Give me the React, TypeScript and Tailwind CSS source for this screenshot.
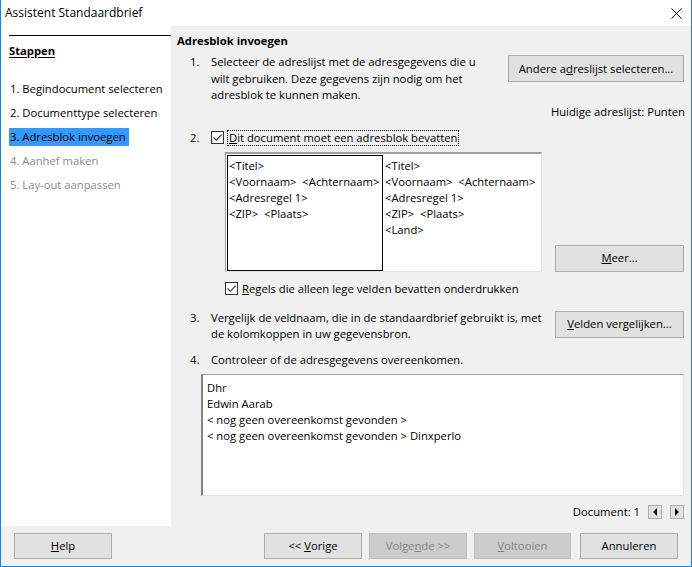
import clsx from "clsx"
import type { ReactNode } from "react"

function Check() {
  return (
    <span className="inline-flex w-[13px] h-[13px] border border-[#333333] bg-white items-center justify-center shrink-0">
      <svg width="11" height="11" viewBox="0 0 11 11">
        <path d="M1.5 5.5 L4.3 8.3 L9.6 2.6" fill="none" stroke="#333333" strokeWidth="1.1" />
      </svg>
    </span>
  )
}

function Btn({ children, className, disabled }: { children: ReactNode; className?: string; disabled?: boolean }) {
  return (
    <div
      className={clsx(
        "flex items-center justify-center border shrink-0",
        disabled ? "bg-[#cccccc] border-[#bfbfbf] text-[#838383]" : "bg-[#e1e1e1] border-[#adadad] text-black",
        className
      )}
    >
      {children}
    </div>
  )
}

function Arrow({ dir }: { dir: "l" | "r" }) {
  return (
    <div className="w-[14px] h-[14px] border border-[#adadad] bg-[#e1e1e1] flex items-center justify-center">
      <svg width="6" height="8" viewBox="0 0 6 8">
        {dir === "l" ? <path d="M5 0 L1 4 L5 8 Z" fill="#000" /> : <path d="M1 0 L5 4 L1 8 Z" fill="#000" />}
      </svg>
    </div>
  )
}

const steps = [
  { label: "1. Begindocument selecteren", state: "done" },
  { label: "2. Documenttype selecteren", state: "done" },
  { label: "3. Adresblok invoegen", state: "active" },
  { label: "4. Aanhef maken", state: "todo" },
  { label: "5. Lay-out aanpassen", state: "todo" },
]

const block = ["<Titel>", "<Voornaam>  <Achternaam>", "<Adresregel 1>", "<ZIP>  <Plaats>"]

export default function App() {
  return (
    <div className="w-[692px] h-[567px] flex flex-col border-l border-r border-b border-[#1883d7] bg-[#f0f0f0] text-[11.25px] text-black font-['Open_Sans',sans-serif] overflow-hidden">
      {/* title bar */}
      <div className="h-[26px] bg-white flex items-center pl-[4px] pr-[9px] shrink-0">
        <span className="text-[12px]">Assistent Standaardbrief</span>
        <svg className="ml-auto" width="11" height="11" viewBox="0 0 11 11">
          <path d="M0.5 0.5 L10.5 10.5 M10.5 0.5 L0.5 10.5" stroke="#000" strokeWidth="1" />
        </svg>
      </div>

      <div className="flex h-[500px] shrink-0">
        {/* steps */}
        <div className="w-[170px] bg-white pt-[9px] pl-[8px] shrink-0">
          <div className="h-px bg-black" />
          <div className="mt-[7px] leading-[16px] font-bold underline underline-offset-2">Stappen</div>
          <div className="mt-[22px] flex flex-col gap-[8px]">
            {steps.map((s) => (
              <div key={s.label} className="h-[16px] leading-[16px] whitespace-nowrap">
                <span
                  className={clsx(
                    "inline-block pl-[1px] pr-[3px]",
                    s.state === "active" && "bg-[#3399ff] h-[18px] -mt-[1px] leading-[18px]",
                    s.state === "todo" && "text-[#8c8c8c]"
                  )}
                >
                  {s.label}
                </span>
              </div>
            ))}
          </div>
        </div>

        {/* content */}
        <div className="flex-1 flex flex-col pt-[7px] leading-[16px]">
          <div className="pl-[6px] font-bold">Adresblok invoegen</div>

          <div className="mt-[5px] flex items-start">
            <span className="w-[40px] pl-[19px] shrink-0">1.</span>
            <div className="leading-[16.5px] whitespace-nowrap">
              Selecteer de adreslijst met de adresgegevens die u
              <br />
              wilt gebruiken. Deze gegevens zijn nodig om het
              <br />
              adresblok te kunnen maken.
            </div>
            <Btn className="ml-auto mr-[7px] mt-[1px] w-[176px] h-[27px]">
              <span>
                Andere a<u>d</u>reslijst selecteren...
              </span>
            </Btn>
          </div>
          <div className="self-end pr-[6px]">Huidige adreslijst: Punten</div>

          <div className="mt-[10px] flex items-center">
            <span className="w-[40px] pl-[19px] shrink-0">2.</span>
            <Check />
            <span className="ml-[3px] border border-dotted border-black px-[1px] leading-[14px]">
              <u>D</u>it document moet een adresblok bevatten
            </span>
          </div>

          <div className="mt-[6px] flex items-end">
            <div className="ml-[54px] w-[317px] h-[120px] bg-white border-t-2 border-l border-t-[#a0a0a0] border-l-[#a0a0a0] border-r border-b border-r-[#e3e3e3] border-b-[#e3e3e3] flex items-start pt-[1px] pl-[1px]">
              <div className="w-[156px] h-[116px] border border-black pl-[1px] pt-[2px] whitespace-pre">
                {block.map((l) => (
                  <div key={l}>{l}</div>
                ))}
              </div>
              <div className="pl-[2px] pt-[3px] whitespace-pre">
                {[...block, "<Land>"].map((l) => (
                  <div key={l}>{l}</div>
                ))}
              </div>
            </div>
            <Btn className="ml-auto mr-[7px] w-[129px] h-[27px]">
              <span>
                <u>M</u>eer...
              </span>
            </Btn>
          </div>

          <div className="mt-[9px] ml-[54px] flex items-center">
            <Check />
            <span className="ml-[4px]">
              <u>R</u>egels die alleen lege velden bevatten onderdrukken
            </span>
          </div>

          <div className="mt-[13px] flex items-start">
            <span className="w-[40px] pl-[19px] shrink-0">3.</span>
            <div className="leading-[16.5px] whitespace-nowrap">
              Vergelijk de veldnaam, die in de standaardbrief gebruikt is, met
              <br />
              de kolomkoppen in uw gegevensbron.
            </div>
            <Btn className="ml-auto mr-[7px] mt-[1px] w-[129px] h-[27px]">
              <span>
                <u>V</u>elden vergelijken...
              </span>
            </Btn>
          </div>

          <div className="mt-[9px] flex">
            <span className="w-[40px] pl-[19px] shrink-0">4.</span>
            <span>Controleer of de adresgegevens overeenkomen.</span>
          </div>

          <div className="mt-[6px] ml-[30px] mr-[7px] h-[122px] bg-white border-l-2 border-t border-l-[#828282] border-t-[#a0a0a0] border-r border-b border-r-[#e3e3e3] border-b-[#e3e3e3] pl-[4px] pt-[5px] leading-[16.3px]">
            <div>Dhr</div>
            <div>Edwin Aarab</div>
            <div>&lt; nog geen overeenkomst gevonden &gt;</div>
            <div>&lt; nog geen overeenkomst gevonden &gt; Dinxperlo</div>
          </div>

          <div className="mt-[8px] mr-[7px] flex items-center justify-end">
            <span>Document: 1</span>
            <div className="ml-[8px]">
              <Arrow dir="l" />
            </div>
            <div className="ml-[8px]">
              <Arrow dir="r" />
            </div>
          </div>
        </div>
      </div>

      {/* footer */}
      <div className="h-[40px] flex items-start pt-[7px] pl-[13px] pr-[13px] shrink-0">
        <Btn className="w-[98px] h-[26px]">
          <span>
            <u>H</u>elp
          </span>
        </Btn>
        <Btn className="ml-auto w-[98px] h-[26px]">
          <span>
            &lt;&lt; <u>V</u>orige
          </span>
        </Btn>
        <Btn disabled className="ml-[7px] w-[98px] h-[26px]">
          <span>
            Volge<u>n</u>de &gt;&gt;
          </span>
        </Btn>
        <Btn disabled className="ml-[7px] w-[97px] h-[26px]">
          <span>
            <u>V</u>oltooien
          </span>
        </Btn>
        <Btn className="ml-[9px] w-[98px] h-[26px]">
          <span>Annuleren</span>
        </Btn>
      </div>
    </div>
  )
}
